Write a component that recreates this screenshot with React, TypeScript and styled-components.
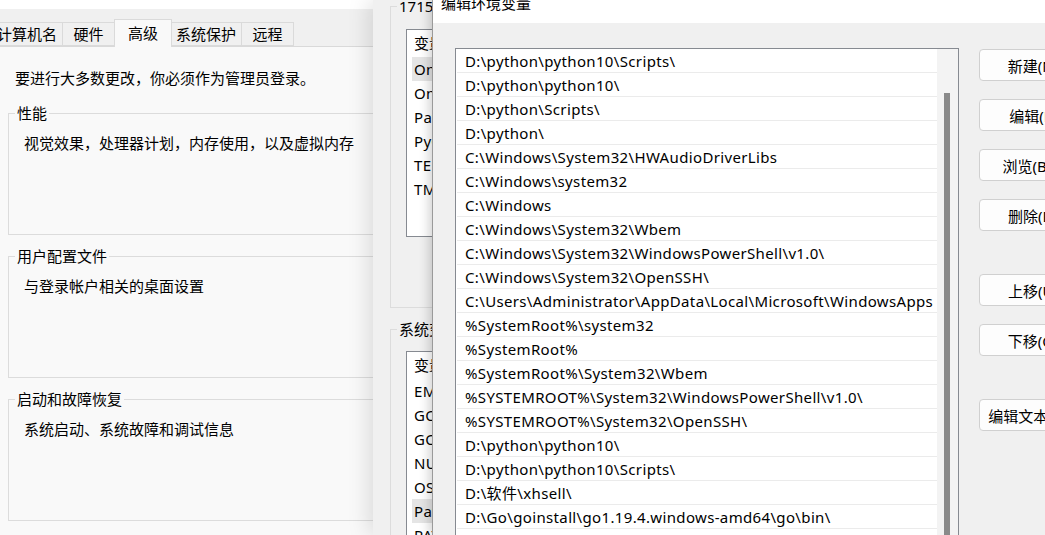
import styled, { createGlobalStyle } from 'styled-components';

const GlobalStyle = createGlobalStyle`
  html, body {
    margin: 0;
    padding: 0;
    background: #ffffff;
  }
  body {
    font-family: "Noto Sans", "Noto Sans CJK SC", sans-serif;
    font-size: 15px;
    color: #000;
  }
  * {
    box-sizing: border-box;
  }
`;

const Desktop = styled.div`
  display: flex;
  width: 1045px;
  height: 535px;
  overflow: hidden;
`;

/* ---------- System properties (back window) ---------- */

const SysWindow = styled.div`
  width: 373px;
  flex-shrink: 0;
  height: 100%;
  background: #f9f9f9;
  display: flex;
  flex-direction: column;
  overflow: hidden;
`;

const TopStrip = styled.div`
  height: 9px;
  flex-shrink: 0;
  background: #ffffff;
`;

const TabBar = styled.div`
  display: flex;
  align-items: flex-end;
  height: 38px;
  flex-shrink: 0;
  margin-left: -9px;
  background: #f0f0f0;
  border-bottom: 1px solid #d9d9d9;
`;

const Tab = styled.div<{ $active?: boolean }>`
  min-width: ${(p) => (p.$active ? '58px' : '53px')};
  height: ${(p) => (p.$active ? '28px' : '24px')};
  margin: ${(p) => (p.$active ? '0 -1px -1px' : '0')};
  padding: ${(p) => (p.$active ? '0 7px 2px' : '0 5px')};
  display: flex;
  align-items: center;
  justify-content: center;
  line-height: 20px;
  white-space: nowrap;
  background: ${(p) => (p.$active ? '#f9f9f9' : '#f0f0f0')};
  border: 1px solid #dadada;
  border-bottom: ${(p) => (p.$active ? 'none' : '1px solid #dadada')};
  position: relative;
  z-index: ${(p) => (p.$active ? 1 : 0)};
  & + & {
    margin-left: -1px;
  }
`;

const SysContent = styled.div`
  width: 430px;
  padding: 21px 0 0 8px;
  display: flex;
  flex-direction: column;
`;

const Intro = styled.div`
  margin: 0 0 15px 7px;
  line-height: 20px;
  white-space: nowrap;
`;

const GroupBox = styled.fieldset`
  margin: 0;
  padding: 0;
  min-width: 0;
  border: 1px solid #dcdcdc;
  & + & {
    margin-top: 11px;
  }
`;

const Legend = styled.legend`
  margin-left: 6px;
  padding: 0 2px;
  line-height: 20px;
  white-space: nowrap;
`;

const GroupText = styled.div`
  height: 111px;
  padding: 10px 15px 0;
  line-height: 20px;
  white-space: nowrap;
`;

/* ---------- Environment variables (middle window) ---------- */

const EnvWindow = styled.div`
  width: 59px;
  flex-shrink: 0;
  height: 100%;
  background: #f0f0f0;
  position: relative;
  z-index: 1;
  overflow: hidden;
  box-shadow: -4px 0 22px rgba(0, 0, 0, 0.13);
`;

const EnvInner = styled.div`
  width: 480px;
  margin-top: -4px;
  padding-left: 17px;
  display: flex;
  flex-direction: column;
`;

const EnvGroupBody = styled.div<{ $pad: number; $h: number }>`
  height: ${(p) => p.$h}px;
  padding: ${(p) => p.$pad}px 0 0 15px;
`;

const VarList = styled.div<{ $short?: boolean }>`
  height: ${(p) => (p.$short ? '208px' : '300px')};
  border: 1px solid #868a91;
  background: #ffffff;
`;

const VarHeader = styled.div`
  height: 27px;
  line-height: 27px;
  padding-left: 7px;
  white-space: nowrap;
`;

const VarRow = styled.div<{ $selected?: boolean }>`
  height: 24px;
  line-height: 24px;
  margin-left: 5px;
  padding-left: 2px;
  white-space: nowrap;
  letter-spacing: 0.3px;
  background: ${(p) => (p.$selected ? '#e5e5e5' : 'transparent')};
`;

/* ---------- Edit environment variable (front window) ---------- */

const EditWindow = styled.div`
  flex: 1;
  height: 100%;
  display: flex;
  flex-direction: column;
  background: #f0f0f0;
  border-left: 1px solid #9a9a9a;
  position: relative;
  z-index: 2;
  box-shadow: -3px 0 10px rgba(0, 0, 0, 0.18);
  overflow: hidden;
`;

const TitleBar = styled.div`
  height: 23px;
  flex-shrink: 0;
  background: #ffffff;
  display: flex;
  align-items: flex-end;
  padding: 0 0 10px 8px;
  overflow: hidden;
`;

const Title = styled.div`
  line-height: 20px;
  white-space: nowrap;
`;

const EditBody = styled.div`
  display: flex;
  align-items: flex-start;
  padding: 25px 0 0 22px;
`;

const PathList = styled.div`
  width: 504px;
  height: 520px;
  flex-shrink: 0;
  display: flex;
  border: 1px solid #868a91;
  background: #ffffff;
`;

const PathRows = styled.div`
  flex: 1;
  padding-left: 1px;
`;

const PathRow = styled.div`
  height: 24px;
  line-height: 21px;
  padding: 2px 0 0 8px;
  border-bottom: 1px solid #ebebeb;
  white-space: nowrap;
  letter-spacing: 0.35px;
  overflow: hidden;
`;

const ScrollTrack = styled.div`
  width: 21px;
  flex-shrink: 0;
  background: #f3f3f3;
  padding: 44px 0 0 7px;
`;

const ScrollThumb = styled.div`
  width: 6px;
  height: 460px;
  background: #8a8a8a;
`;

const ButtonColumn = styled.div`
  margin: 1px 0 0 20px;
  display: flex;
  flex-direction: column;
  gap: 43px;
`;

const ButtonGroup = styled.div`
  display: flex;
  flex-direction: column;
  gap: 18px;
`;

const Button = styled.button`
  width: 108px;
  height: 32px;
  flex-shrink: 0;
  padding: 0;
  font: inherit;
  color: #000;
  background: #fdfdfd;
  border: 1px solid #d0d0d0;
  border-radius: 4px;
  white-space: nowrap;
`;

const userVars = ['OneDrive', 'OneDriveConsumer', 'Path', 'PyCharm Community Edition', 'TEMP', 'TMP'];
const systemVars = ['EMSDK', 'GOPATH', 'GOROOT', 'NUMBER_OF_PROCESSORS', 'OS', 'Path', 'PATHEXT'];

const paths = [
  'D:\\python\\python10\\Scripts\\',
  'D:\\python\\python10\\',
  'D:\\python\\Scripts\\',
  'D:\\python\\',
  'C:\\Windows\\System32\\HWAudioDriverLibs',
  'C:\\Windows\\system32',
  'C:\\Windows',
  'C:\\Windows\\System32\\Wbem',
  'C:\\Windows\\System32\\WindowsPowerShell\\v1.0\\',
  'C:\\Windows\\System32\\OpenSSH\\',
  'C:\\Users\\Administrator\\AppData\\Local\\Microsoft\\WindowsApps',
  '%SystemRoot%\\system32',
  '%SystemRoot%',
  '%SystemRoot%\\System32\\Wbem',
  '%SYSTEMROOT%\\System32\\WindowsPowerShell\\v1.0\\',
  '%SYSTEMROOT%\\System32\\OpenSSH\\',
  'D:\\python\\python10\\',
  'D:\\python\\python10\\Scripts\\',
  'D:\\软件\\xhsell\\',
  'D:\\Go\\goinstall\\go1.19.4.windows-amd64\\go\\bin\\',
  '',
];

const App = () => {
  return (
    <>
      <GlobalStyle />
      <Desktop>
        <SysWindow>
          <TopStrip />
          <TabBar>
            <Tab>计算机名</Tab>
            <Tab>硬件</Tab>
            <Tab $active>高级</Tab>
            <Tab>系统保护</Tab>
            <Tab>远程</Tab>
          </TabBar>
          <SysContent>
            <Intro>要进行大多数更改，你必须作为管理员登录。</Intro>
            <GroupBox>
              <Legend>性能</Legend>
              <GroupText>视觉效果，处理器计划，内存使用，以及虚拟内存</GroupText>
            </GroupBox>
            <GroupBox>
              <Legend>用户配置文件</Legend>
              <GroupText>与登录帐户相关的桌面设置</GroupText>
            </GroupBox>
            <GroupBox>
              <Legend>启动和故障恢复</Legend>
              <GroupText>系统启动、系统故障和调试信息</GroupText>
            </GroupBox>
          </SysContent>
        </SysWindow>

        <EnvWindow>
          <EnvInner>
            <GroupBox>
              <Legend>17150 的用户变量(U)</Legend>
              <EnvGroupBody $pad={13} $h={291}>
                <VarList $short>
                  <VarHeader>变量</VarHeader>
                  {userVars.map((v, i) => (
                    <VarRow key={v} $selected={i === 0}>
                      {v}
                    </VarRow>
                  ))}
                </VarList>
              </EnvGroupBody>
            </GroupBox>
            <GroupBox>
              <Legend>系统变量(S)</Legend>
              <EnvGroupBody $pad={12} $h={300}>
                <VarList>
                  <VarHeader>变量</VarHeader>
                  {systemVars.map((v, i) => (
                    <VarRow key={v} $selected={i === 5}>
                      {v}
                    </VarRow>
                  ))}
                </VarList>
              </EnvGroupBody>
            </GroupBox>
          </EnvInner>
        </EnvWindow>

        <EditWindow>
          <TitleBar>
            <Title>编辑环境变量</Title>
          </TitleBar>
          <EditBody>
            <PathList>
              <PathRows>
                {paths.map((p, i) => (
                  <PathRow key={i}>{p}</PathRow>
                ))}
              </PathRows>
              <ScrollTrack>
                <ScrollThumb />
              </ScrollTrack>
            </PathList>
            <ButtonColumn>
              <ButtonGroup>
                <Button>新建(N)</Button>
                <Button>编辑(E)</Button>
                <Button>浏览(B)...</Button>
                <Button>删除(D)</Button>
              </ButtonGroup>
              <ButtonGroup>
                <Button>上移(U)</Button>
                <Button>下移(O)</Button>
              </ButtonGroup>
              <ButtonGroup>
                <Button>编辑文本(T)...</Button>
              </ButtonGroup>
            </ButtonColumn>
          </EditBody>
        </EditWindow>
      </Desktop>
    </>
  );
};

export default App;
